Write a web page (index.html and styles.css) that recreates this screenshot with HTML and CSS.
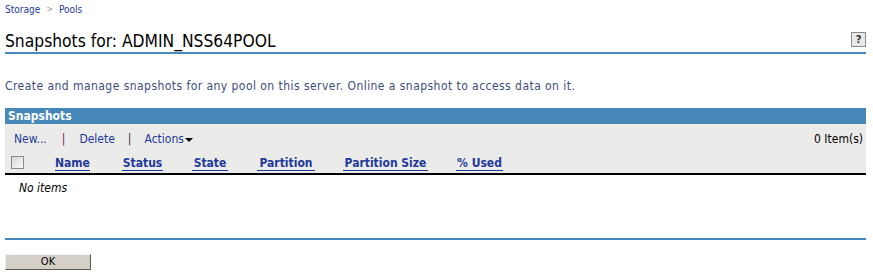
FILE: index.html
```html
<!DOCTYPE html>
<html>
  <head>
    <meta charset="utf-8" />
    <link rel="stylesheet" href="styles.css">
  </head>

  <body class="nss-body">
    <div class="nss-crumbs">
      <a class="nss-crumb-link">Storage</a>
      <span class="nss-crumb-sep">&gt;</span>
      <a class="nss-crumb-link">Pools</a>
    </div>

    <div class="nss-title-row">
      <h1 class="nss-title">Snapshots for: ADMIN_NSS64POOL</h1>
      <button class="nss-help-button">?</button>
    </div>

    <p class="nss-description">
      Create and manage snapshots for any pool on this server. Online a snapshot to access data on it.
    </p>

    <div class="nss-panel">
      <div class="nss-panel-heading">Snapshots</div>

      <div class="nss-toolbar">
        <div class="nss-toolbar-actions">
          <a class="nss-toolbar-link">New...</a>
          <span class="nss-toolbar-sep nss-toolbar-sep-purple">|</span>
          <a class="nss-toolbar-link">Delete</a>
          <span class="nss-toolbar-sep">|</span>
          <a class="nss-toolbar-link">Actions<span class="nss-caret"></span></a>
        </div>
        <span class="nss-item-count">0 Item(s)</span>
      </div>

      <div class="nss-columns">
        <span class="nss-checkbox"></span>
        <a class="nss-column nss-column-name">Name</a>
        <a class="nss-column nss-column-status">Status</a>
        <a class="nss-column nss-column-state">State</a>
        <a class="nss-column nss-column-partition">Partition</a>
        <a class="nss-column nss-column-size">Partition Size</a>
        <a class="nss-column nss-column-used">% Used</a>
      </div>

      <div class="nss-empty">No items</div>
    </div>

    <div class="nss-footer">
      <button class="nss-ok-button">OK</button>
    </div>
  </body>
</html>
```

FILE: styles.css
```css
:root {
  --font: Tahoma, "DejaVu Sans Condensed", "DejaVu Sans", sans-serif;
  --blue-bar: #4689b9;
  --link: #1f3a9a;
}

body {
  font-family: var(--font);
}

.nss-body {
  margin: 0;
  padding: 0 7px 0 5px;
  background: #ffffff;
  color: #000000;
}

.nss-crumbs {
  display: flex;
  align-items: center;
  gap: 6px;
  height: 18px;
  font-size: 10px;
}

.nss-crumb-link {
  color: var(--link);
}

.nss-crumb-sep {
  color: #9a9a9a;
  font-size: 9px;
}

.nss-title-row {
  display: flex;
  align-items: flex-end;
  justify-content: space-between;
  height: 34px;
  border-bottom: 2px solid var(--blue-bar);
}

.nss-title {
  margin: 0;
  font-size: 17.3px;
  font-weight: normal;
  line-height: 22px;
}

.nss-help-button {
  width: 15px;
  height: 15px;
  margin: 0 0 5px 0;
  padding: 0;
  border: 1px solid #8c8c8c;
  background-color: #e8e8e8;
  color: #333333;
  font-family: var(--font);
  font-size: 11px;
  font-weight: bold;
  line-height: 13px;
}

.nss-description {
  margin: 25px 0 0 0;
  height: 29px;
  font-size: 12px;
  letter-spacing: 0.45px;
  color: #3c4e7c;
}

.nss-panel-heading {
  height: 16px;
  padding-left: 3px;
  background-color: var(--blue-bar);
  color: #ffffff;
  font-size: 12px;
  font-weight: bold;
  line-height: 16px;
}

.nss-toolbar {
  display: flex;
  align-items: center;
  justify-content: space-between;
  height: 30px;
  padding: 0 3px 0 9px;
  background-color: #ebebea;
  font-size: 12px;
}

.nss-toolbar-actions {
  display: flex;
  align-items: center;
}

.nss-toolbar-link {
  color: var(--link);
}

.nss-toolbar-sep {
  margin: 0 13px 0 13px;
  color: #333333;
}

.nss-toolbar-sep-purple {
  margin: 0 14px 0 15px;
  color: #6a1b5a;
}

.nss-caret {
  display: inline-block;
  margin-left: 1px;
  border-left: 4px solid transparent;
  border-right: 4px solid transparent;
  border-top: 4px solid #000000;
  vertical-align: middle;
}

.nss-item-count {
  color: #000000;
}

.nss-columns {
  display: flex;
  align-items: center;
  height: 19px;
  padding-left: 6px;
  background-color: #ebebea;
  border-bottom: 2px solid #000000;
  font-size: 12px;
  font-weight: bold;
}

.nss-checkbox {
  width: 11px;
  height: 11px;
  margin-top: -2px;
  border: 1px solid #8a8a8a;
  background: linear-gradient(135deg, #d8d8d8, #f8f8f8);
}

.nss-column {
  display: flex;
  justify-content: center;
  color: var(--link);
  border-bottom: 1px solid var(--link);
  line-height: 14px;
}

.nss-column-name {
  width: 35px;
  margin-left: 31px;
}

.nss-column-status {
  width: 41px;
  margin-left: 32px;
}

.nss-column-state {
  width: 36px;
  margin-left: 29px;
}

.nss-column-partition {
  width: 58px;
  margin-left: 29px;
}

.nss-column-size {
  width: 85px;
  margin-left: 28px;
}

.nss-column-used {
  width: 47px;
  margin-left: 28px;
}

.nss-empty {
  height: 65px;
  padding: 6px 0 0 14px;
  box-sizing: border-box;
  font-size: 12px;
  font-style: italic;
  border-bottom: 2px solid var(--blue-bar);
}

.nss-footer {
  padding-top: 10px;
}

.nss-ok-button {
  width: 86px;
  height: 16px;
  padding: 0;
  border: 1px solid;
  border-color: #f2f2ee #5a5a56 #5a5a56 #f2f2ee;
  background-color: #d4d0c8;
  color: #000000;
  font-family: var(--font);
  font-size: 11px;
  line-height: 14px;
}
```
